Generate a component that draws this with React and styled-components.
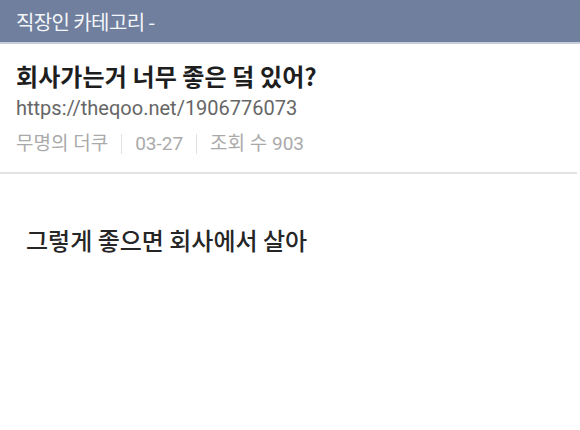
import React from "react";
import styled, { createGlobalStyle } from "styled-components";

const post = {
    category: "직장인 카테고리 -",
    title: "회사가는거 너무 좋은 덬 있어?",
    url: "https://theqoo.net/1906776073",
    meta: ["무명의 더쿠", "03-27", "조회 수 903"],
    comment: "그렇게 좋으면 회사에서 살아",
};

export default function App() {
    return (
        <Page>
            <GlobalStyle />
            <CategoryBar>{post.category}</CategoryBar>
            <PostHead>
                <Title>{post.title}</Title>
                <Url>{post.url}</Url>
                <Meta>
                    {post.meta.map((m, i) => (
                        <MetaItem key={i} first={i === 0}>{m}</MetaItem>
                    ))}
                </Meta>
            </PostHead>
            <Body>{post.comment}</Body>
        </Page>
    );
}

const GlobalStyle = createGlobalStyle`
    body {
        margin: 0;
        background: #ffffff;
        font-family: "Noto Sans CJK KR", "Noto Sans", sans-serif;
    }
`

const Page = styled.div`
    width: 580px;
    height: 430px;
    overflow: hidden;
    background: #fff;
`

const CategoryBar = styled.div`
    height: 42px;
    display: flex;
    align-items: center;
    padding-left: 16px;
    background: #6f7f9d;
    border-bottom: 2px solid #c7cdd9;
    color: #f4f6fa;
    font-size: 20px;
    letter-spacing: -0.6px;
`

const PostHead = styled.div`
    margin-right: 3px;
    padding: 17px 0 13px 16px;
    border-bottom: 2px solid #e3e3e3;
    display: flex;
    flex-direction: column;
`

const Title = styled.div`
    font-size: 24px;
    font-weight: 700;
    color: #1e1e1e;
    line-height: 30px;
    letter-spacing: 0.1px;
`

const Url = styled.div`
    margin-top: 2px;
    font-family: "Roboto", "Noto Sans CJK KR", sans-serif;
    font-size: 20px;
    color: #666;
    line-height: 30px;
`

const Meta = styled.div`
    margin-top: 6px;
    display: flex;
    align-items: center;
    font-size: 19px;
    color: #aaa;
    line-height: 30px;
`

const MetaItem = styled.span`
    font-family: "Roboto", "Noto Sans CJK KR", sans-serif;
    ${(p) => !p.first && `
        border-left: 1px solid #e2e2e2;
        margin-left: 13px;
        padding-left: 13px;
        line-height: 20px;
    `}
`

const Body = styled.div`
    padding: 49px 0 0 26px;
    font-size: 24px;
    line-height: 34px;
    color: #262626;
    font-weight: 500;
    letter-spacing: 0px;
`
